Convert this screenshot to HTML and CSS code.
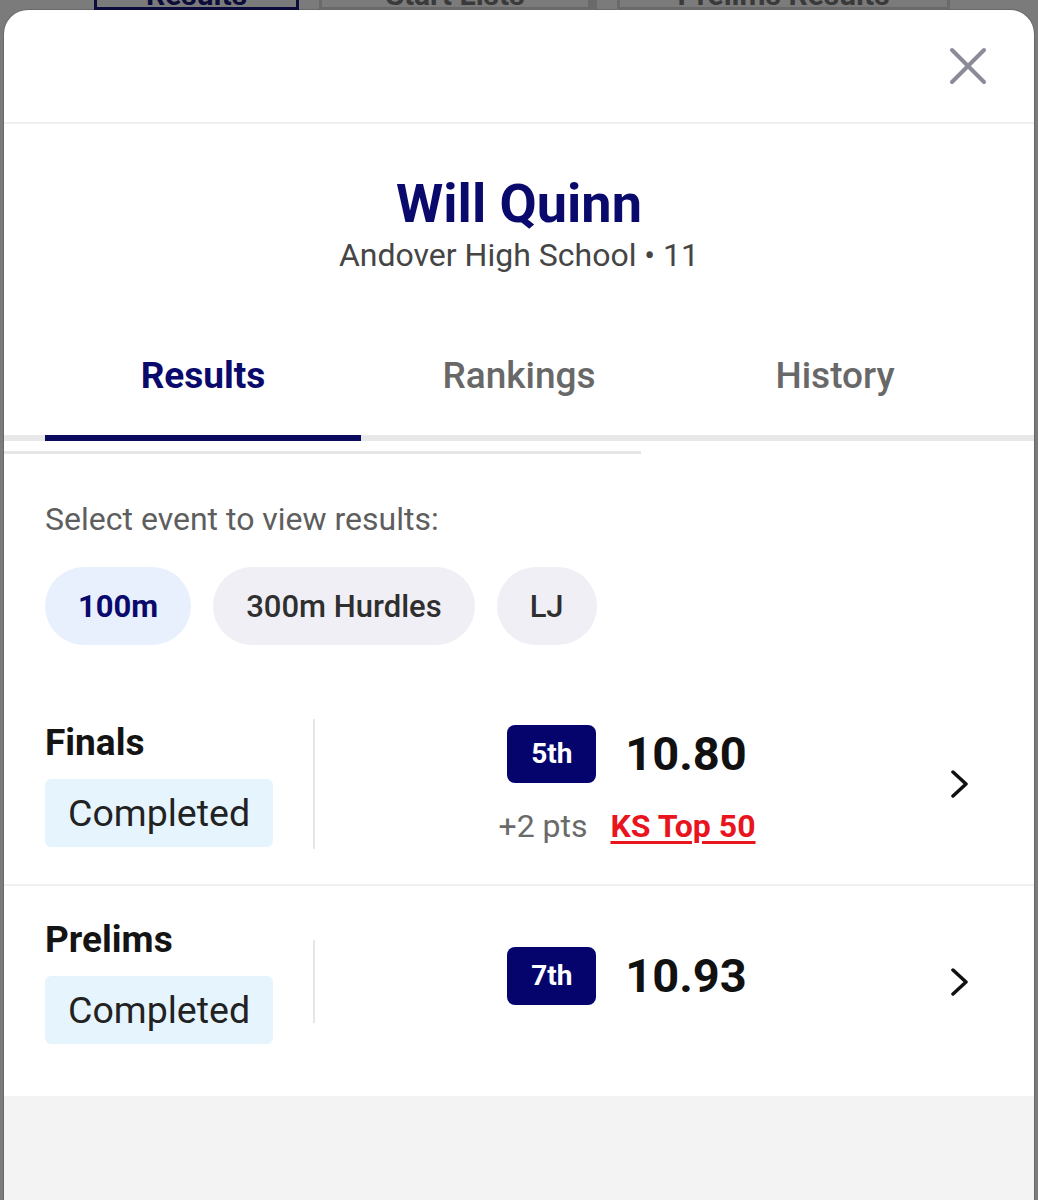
FILE: index.html
```html
<!DOCTYPE html>
<html lang="en">
<head>
  <meta charset="UTF-8">
  <title>Will Quinn</title>
  <meta name="viewport" content="width=device-width, initial-scale=1">
  <link rel="stylesheet" href="styles.css">
</head>
<body>
<div class="backdrop-tabs">
  <div class="bg-tab active">Results</div>
  <div class="bg-tab wide">Start Lists</div>
  <div class="bg-tab small"></div>
  <div class="bg-tab wider">Prelims Results</div>
</div>

<div class="modal">
  <div class="modal-header">
    <button class="close-btn" aria-label="Close">
      <svg width="38" height="38" viewBox="0 0 38 38">
        <path d="M3 3 L35 35 M35 3 L3 35" stroke="#8b8b97" stroke-width="4" stroke-linecap="round" fill="none"/>
      </svg>
    </button>
  </div>

  <div class="profile">
    <div class="athlete-name">Will Quinn</div>
    <div class="athlete-school">Andover High School &bull; 11</div>
  </div>

  <div class="tabs">
    <div class="tab active">Results</div>
    <div class="tab">Rankings</div>
    <div class="tab">History</div>
  </div>
  <div class="tab-track"><div class="tab-indicator"></div></div>
  <div class="scroll-line"></div>

  <div class="events">
    <div class="events-label">Select event to view results:</div>
    <div class="chips">
      <button class="chip selected">100m</button>
      <button class="chip">300m Hurdles</button>
      <button class="chip">LJ</button>
    </div>
  </div>

  <div class="rounds">
    <div class="round-row">
      <div class="round-info">
        <div class="round-name">Finals</div>
        <div class="round-status">Completed</div>
      </div>
      <div class="round-result">
        <div class="result-main">
          <span class="place">5th</span>
          <span class="mark">10.80</span>
        </div>
        <div class="result-sub">
          <span class="pts">+2 pts</span>
          <a class="top-list" href="#">KS Top 50</a>
        </div>
      </div>
      <div class="chevron">
        <svg width="18" height="28" viewBox="0 0 18 28">
          <path d="M2 2 L15 14 L2 26" stroke="#111" stroke-width="3.5" stroke-linecap="round" stroke-linejoin="round" fill="none"/>
        </svg>
      </div>
    </div>

    <div class="round-row">
      <div class="round-info">
        <div class="round-name">Prelims</div>
        <div class="round-status">Completed</div>
      </div>
      <div class="round-result single">
        <div class="result-main">
          <span class="place">7th</span>
          <span class="mark">10.93</span>
        </div>
      </div>
      <div class="chevron">
        <svg width="18" height="28" viewBox="0 0 18 28">
          <path d="M2 2 L15 14 L2 26" stroke="#111" stroke-width="3.5" stroke-linecap="round" stroke-linejoin="round" fill="none"/>
        </svg>
      </div>
    </div>
  </div>

  <div class="modal-footer"></div>
</div>
</body>
</html>
```

FILE: styles.css
```css
* {
  box-sizing: border-box;
}

body {
  margin: 0;
  padding: 0;
  background-color: #7b7b7b;
  font-family: 'Roboto', 'Noto Sans', sans-serif;
  color: #111;
  overflow: hidden;
}

/* page behind the modal, dimmed */
.backdrop-tabs {
  height: 10px;
  overflow: hidden;
  display: flex;
  padding-left: 94px;
  gap: 20px;
}

.bg-tab {
  height: 40px;
  margin-top: -30px;
  width: 205px;
  border: 3px solid #6a6a6a;
  border-top: none;
  color: #3a3a3a;
  font-size: 30px;
  font-weight: 700;
  line-height: 50px;
  text-align: center;
}

.bg-tab.active {
  border-color: #0c0c3c;
  color: #0c0c3c;
}

.bg-tab.wide {
  width: 272px;
}

.bg-tab.small {
  width: 2px;
  margin-left: -20px;
}

.bg-tab.wider {
  width: 333px;
}

.modal {
  margin: 0 4px;
  background-color: #fff;
  border-radius: 24px 24px 0 0;
  box-shadow: 0 0 0 1px rgba(0, 0, 0, 0.15);
  min-height: 1190px;
  display: flex;
  flex-direction: column;
}

.modal-header {
  height: 114px;
  border-bottom: 2px solid #efefef;
  display: flex;
  justify-content: flex-end;
  align-items: center;
  padding-right: 47px;
}

.close-btn {
  background: none;
  border: none;
  padding: 0;
  width: 38px;
  height: 38px;
  cursor: pointer;
}

.profile {
  padding-top: 49px;
  text-align: center;
}

.athlete-name {
  font-size: 54px;
  line-height: 62px;
  font-weight: 700;
  color: #0a0a6c;
}

.athlete-school {
  margin-top: 1px;
  font-size: 32px;
  line-height: 38px;
  color: #454545;
}

.tabs {
  display: flex;
  padding: 80px 41px 0;
}

.tab {
  flex: 1;
  text-align: center;
  font-size: 37px;
  line-height: 44px;
  font-weight: 500;
  color: #686868;
  padding-bottom: 37px;
}

.tab.active {
  font-weight: 700;
  color: #0a0a6c;
}

.tab-track {
  height: 6px;
  background-color: #e8e8e8;
  padding: 0 41px;
}

.tab-indicator {
  width: 316px;
  height: 6px;
  background-color: #0a0a5e;
}

.scroll-line {
  width: 637px;
  height: 3px;
  margin-top: 10px;
  background-color: #e6e6e6;
}

.events {
  padding: 46px 41px 0;
}

.events-label {
  font-size: 32px;
  line-height: 38px;
  color: #5e5e5e;
}

.chips {
  display: flex;
  gap: 22px;
  margin-top: 29px;
}

.chip {
  height: 78px;
  padding: 0 33px;
  border: none;
  border-radius: 39px;
  background-color: #efeff5;
  font-family: inherit;
  font-size: 31px;
  font-weight: 500;
  color: #2f2f2f;
}

.chip.selected {
  background-color: #e8f0fd;
  color: #0a0a6c;
  font-weight: 700;
}

.rounds {
  margin-top: 39px;
  padding-bottom: 17px;
}

.round-row {
  display: flex;
  align-items: center;
  padding: 35px 41px;
  border-bottom: 2px solid #f0f0f0;
}

.round-row:last-child {
  border-bottom: none;
  padding-top: 33px;
}

.round-info {
  width: 268px;
}

.round-name {
  font-size: 37px;
  line-height: 42px;
  font-weight: 700;
  color: #141414;
}

.round-status {
  display: inline-block;
  margin-top: 15px;
  padding: 0 23px;
  height: 68px;
  line-height: 68px;
  border-radius: 6px;
  background-color: #e6f4fd;
  font-size: 37.5px;
  color: #222;
}

.round-result {
  flex: 1;
  border-left: 2px solid #e6e6e6;
  padding: 6px 0 4px;
  display: flex;
  flex-direction: column;
  align-items: center;
  gap: 24px;
}

.round-result.single {
  padding: 7px 0 18px;
}

.result-main {
  display: flex;
  align-items: center;
  gap: 29px;
}

.place {
  display: inline-block;
  width: 89px;
  height: 58px;
  line-height: 58px;
  text-align: center;
  border-radius: 8px;
  background-color: #04046c;
  color: #fff;
  font-size: 28px;
  font-weight: 700;
}

.mark {
  font-size: 47px;
  line-height: 58px;
  font-weight: 700;
  color: #111;
}

.result-sub {
  display: flex;
  gap: 23px;
  font-size: 32px;
  line-height: 38px;
}

.pts {
  color: #6a6a6a;
}

.top-list {
  color: #e8141e;
  font-weight: 700;
  text-decoration: underline;
  text-decoration-thickness: 3px;
  text-underline-offset: 4px;
}

.chevron {
  width: 54px;
  padding-right: 12px;
  display: flex;
  justify-content: center;
}

.modal-footer {
  flex: 1;
  background-color: #f3f3f3;
}
```
